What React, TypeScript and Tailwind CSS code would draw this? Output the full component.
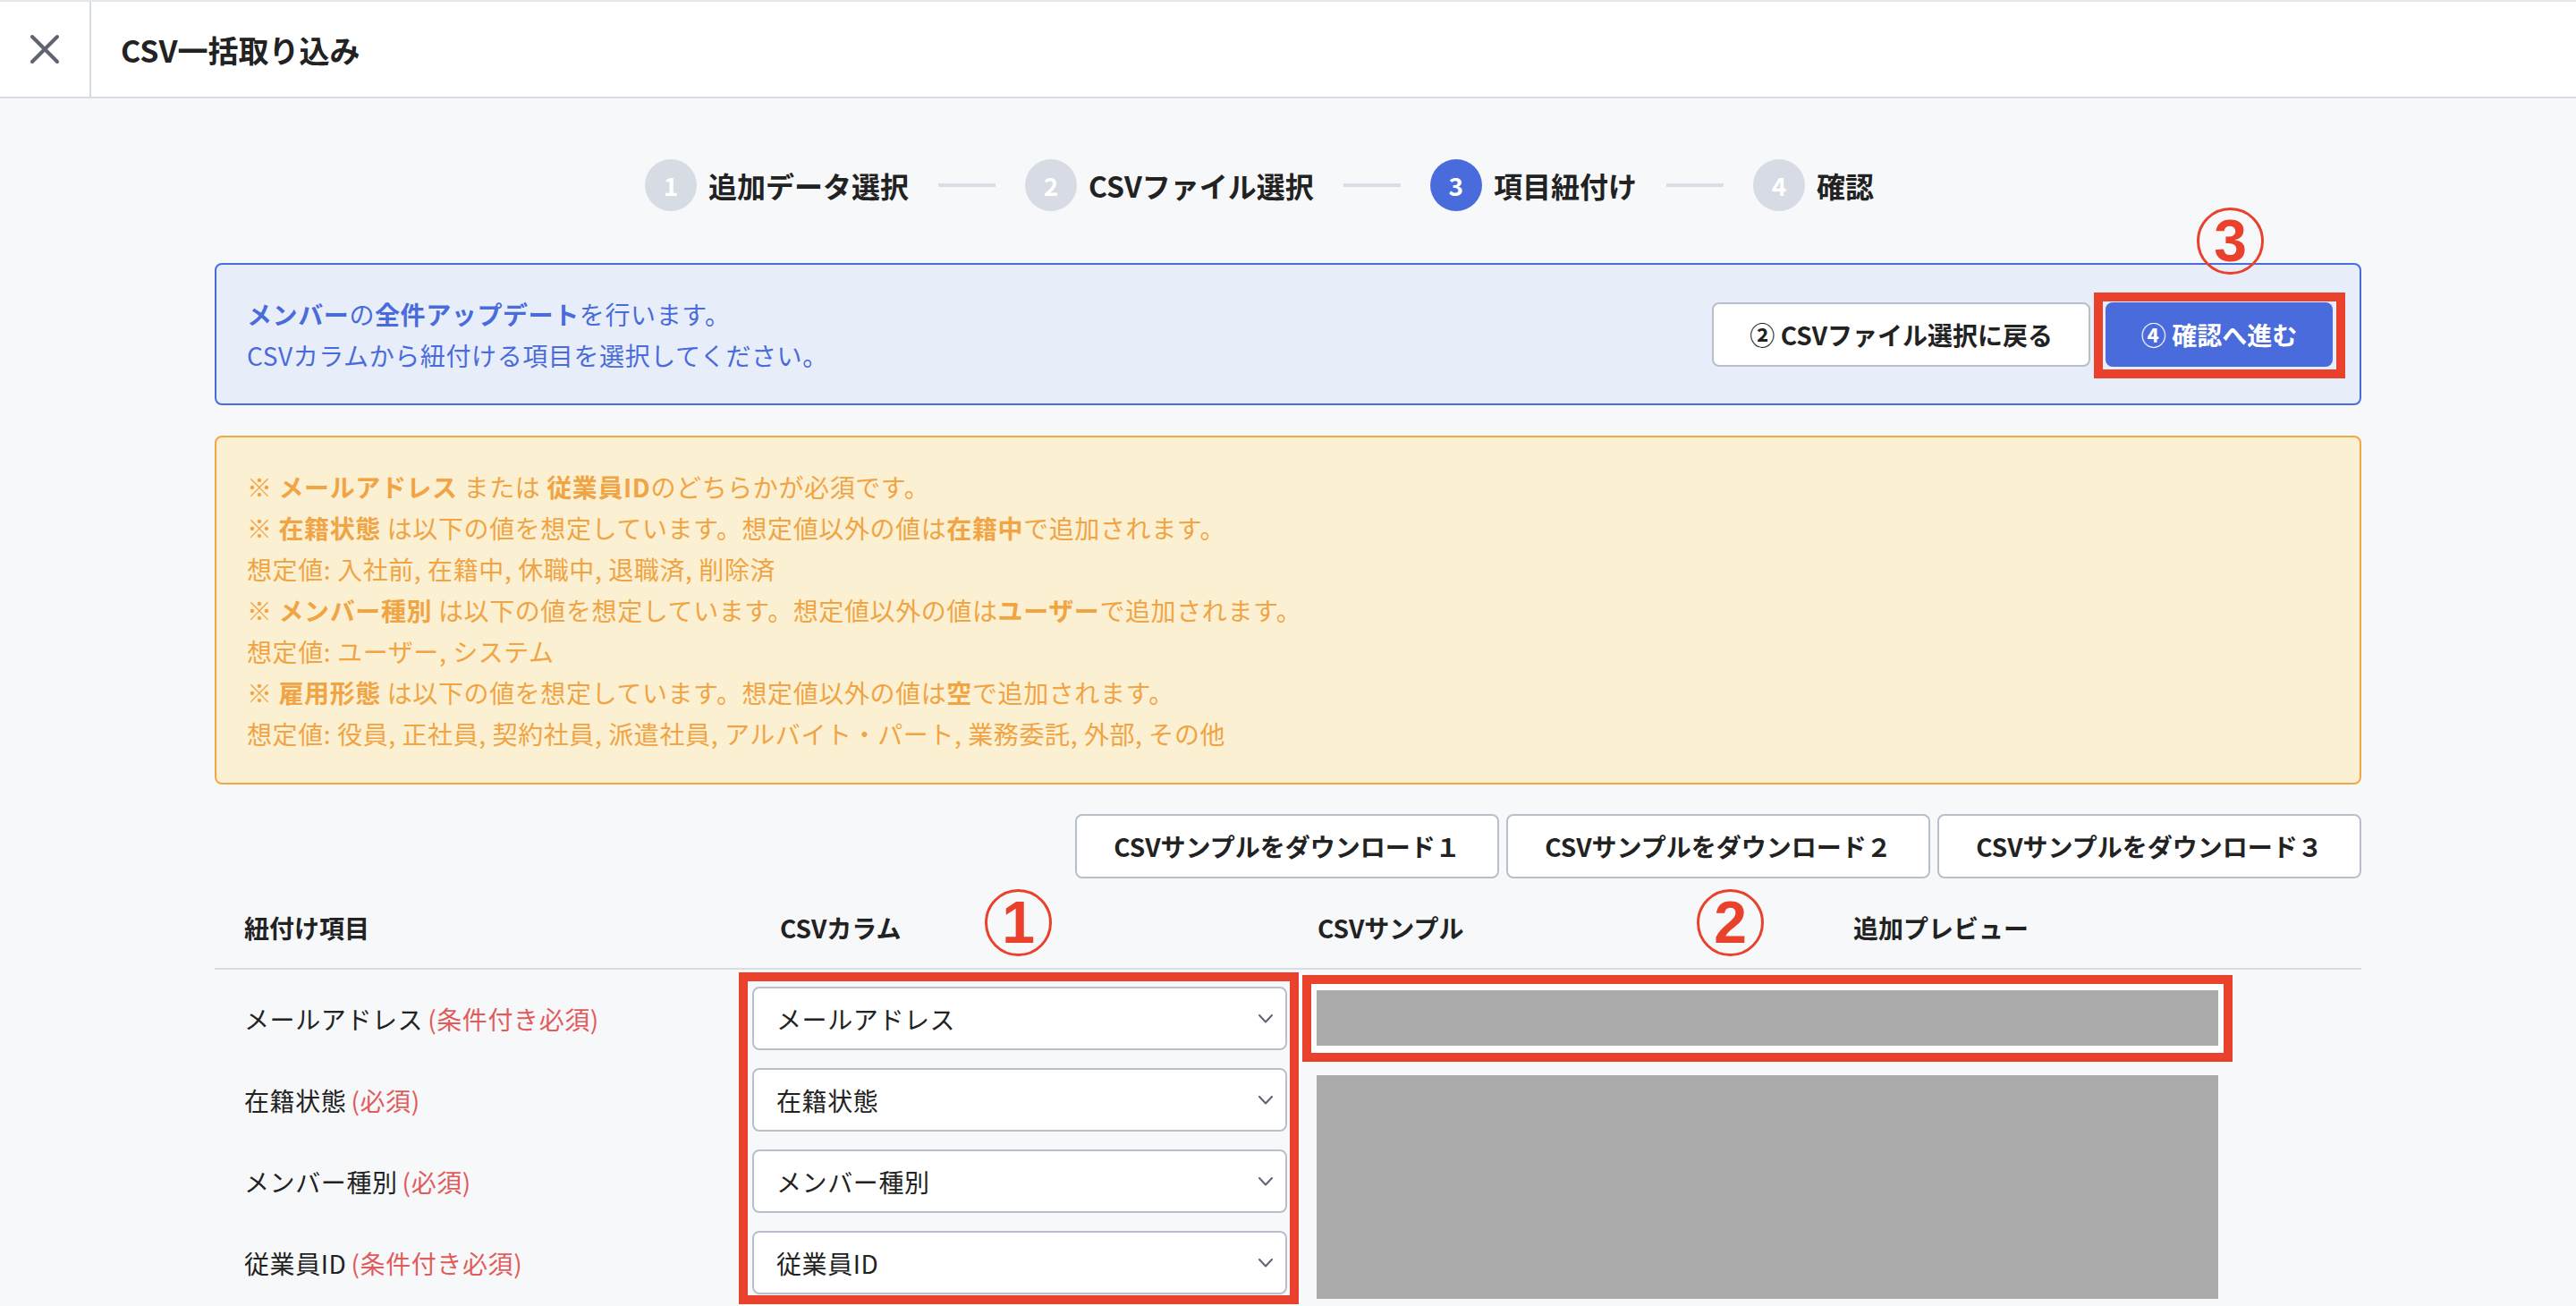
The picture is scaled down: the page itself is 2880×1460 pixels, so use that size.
import React from "react";

const Chevron = () => (
  <svg width="16" height="10" viewBox="0 0 16 10" fill="none">
    <polyline points="1,1 8,8.5 15,1" stroke="#5f6470" strokeWidth="2" strokeLinecap="round" strokeLinejoin="round" />
  </svg>
);

const Annot = ({ n, className }: { n: string; className: string }) => (
  <div
    className={`absolute w-[75px] h-[75px] rounded-full border-[3px] border-[#e9412b] flex items-center justify-center text-[#e9412b] text-[66px] font-bold leading-none font-['Liberation_Sans',sans-serif] ${className}`}
  >
    <span className="-mt-[2px]">{n}</span>
  </div>
);

const Step = ({ n, label, active }: { n: string; label: string; active?: boolean }) => (
  <div className="flex items-center gap-[13px]">
    <div
      className={`w-[58px] h-[58px] rounded-full flex items-center justify-center text-white text-[28px] font-bold ${
        active ? "bg-[#4a6bdb]" : "bg-[#d6dbe4]"
      }`}
    >
      {n}
    </div>
    <span className="text-[32px] font-bold text-[#222]">{label}</span>
  </div>
);

const StepLine = () => <div className="w-[64px] h-[4px] bg-[#d9dee6] mx-[33px]" />;

const B = ({ children }: { children: React.ReactNode }) => <span className="font-bold">{children}</span>;

const rows = [
  { label: "メールアドレス", req: "(条件付き必須)", value: "メールアドレス" },
  { label: "在籍状態", req: "(必須)", value: "在籍状態" },
  { label: "メンバー種別", req: "(必須)", value: "メンバー種別" },
  { label: "従業員ID", req: "(条件付き必須)", value: "従業員ID" },
];

export default function App() {
  return (
    <div className="w-full min-h-[1460px] bg-[#f7f8fa] font-['Noto_Sans_CJK_JP',sans-serif] text-[#222] overflow-hidden">
      {/* Header */}
      <div className="h-[110px] bg-white border-t-2 border-b-2 border-t-[#e4e7ec] border-b-[#d8dde5] flex items-stretch">
        <div className="w-[102px] border-r-2 border-[#d5dbe3] flex items-center justify-center">
          <svg width="34" height="34" viewBox="0 0 34 34" fill="none">
            <line x1="3" y1="3" x2="31" y2="31" stroke="#5f6470" strokeWidth="4" strokeLinecap="round" />
            <line x1="31" y1="3" x2="3" y2="31" stroke="#5f6470" strokeWidth="4" strokeLinecap="round" />
          </svg>
        </div>
        <div className="flex items-center pl-[33px] text-[34px] font-bold text-[#222]">CSV一括取り込み</div>
      </div>

      <div className="w-[2400px] mx-auto">
        {/* Steps */}
        <div className="mt-[68px] flex items-center justify-center pr-[64px]">
          <Step n="1" label="追加データ選択" />
          <StepLine />
          <Step n="2" label="CSVファイル選択" />
          <StepLine />
          <Step n="3" label="項目紐付け" active />
          <StepLine />
          <Step n="4" label="確認" />
        </div>

        {/* Info box */}
        <div className="relative mt-[58px] h-[159px] rounded-[8px] border-2 border-[#4a6bdb] bg-[#e8eef9] flex items-center justify-between pl-[34px] pr-[30px]">
          <div className="text-[28px] leading-[46px] tracking-[0.6px] text-[#4a6bdb]">
            <div>
              <B>メンバー</B>の<B>全件アップデート</B>を行います。
            </div>
            <div>CSVカラムから紐付ける項目を選択してください。</div>
          </div>
          <div className="flex items-center gap-[17px]">
            <button className="h-[72px] px-[40px] rounded-[8px] border-2 border-[#b9bfca] bg-white text-[28px] font-bold text-[#222]">
              ② CSVファイル選択に戻る
            </button>
            <div className="relative">
              <button className="h-[72px] w-[254px] rounded-[8px] bg-[#4a6bdb] text-[28px] font-bold text-white">
                ④ 確認へ進む
              </button>
              <div className="absolute -left-[13px] -right-[14px] -top-[11px] -bottom-[13px] border-[10px] border-[#e9412b]" />
            </div>
          </div>
          <Annot n="3" className="-top-[64px] right-[107px]" />
        </div>

        {/* Notice box */}
        <div className="mt-[34px] rounded-[8px] border-2 border-[#f2a647] bg-[#fcf0d2] px-[34px] py-[32px] text-[28px] leading-[46px] tracking-[0.6px] text-[#f0a444]">
          <div>
            ※ <B>メールアドレス</B> または <B>従業員ID</B>のどちらかが必須です。
          </div>
          <div>
            ※ <B>在籍状態</B> は以下の値を想定しています。想定値以外の値は<B>在籍中</B>で追加されます。
          </div>
          <div>想定値: 入社前, 在籍中, 休職中, 退職済, 削除済</div>
          <div>
            ※ <B>メンバー種別</B> は以下の値を想定しています。想定値以外の値は<B>ユーザー</B>で追加されます。
          </div>
          <div>想定値: ユーザー, システム</div>
          <div>
            ※ <B>雇用形態</B> は以下の値を想定しています。想定値以外の値は<B>空</B>で追加されます。
          </div>
          <div>想定値: 役員, 正社員, 契約社員, 派遣社員, アルバイト・パート, 業務委託, 外部, その他</div>
        </div>

        {/* Download buttons */}
        <div className="mt-[33px] flex justify-end gap-[8px]">
          {["１", "２", "３"].map((d) => (
            <button
              key={d}
              className="w-[474px] h-[72px] rounded-[8px] border-2 border-[#b9bfca] bg-white text-[28px] font-bold text-[#222]"
            >
              CSVサンプルをダウンロード{d}
            </button>
          ))}
        </div>

        {/* Table header */}
        <div className="relative h-[102px] border-b-2 border-[#d8dde5] grid grid-cols-[599px_601px_599px_1fr] items-center pl-[33px] pt-[10px] text-[28px] font-bold text-[#222]">
          <div>紐付け項目</div>
          <div>CSVカラム</div>
          <div>CSVサンプル</div>
          <div>追加プレビュー</div>
          <Annot n="1" className="top-[12px] left-[861px]" />
          <Annot n="2" className="top-[12px] left-[1657px]" />
        </div>

        {/* Table body */}
        <div className="flex">
          <div className="w-[601px] pt-[19px] flex flex-col gap-[20px]">
            {rows.map((r) => (
              <div key={r.label} className="h-[71px] flex items-center pl-[33px] text-[28px] tracking-[0.6px]">
                <span className="text-[#222]">{r.label}</span>
                <span className="text-[#e25b5b] ml-[5px]">{r.req}</span>
              </div>
            ))}
          </div>
          <div className="relative mt-[19px] w-[598px] self-start flex flex-col gap-[20px]">
            {rows.map((r) => (
              <div
                key={r.value}
                className="h-[71px] rounded-[8px] border-2 border-[#b9bfca] bg-white flex items-center justify-between pl-[25px] pr-[14px] text-[28px] tracking-[0.6px] text-[#222]"
              >
                <span>{r.value}</span>
                <Chevron />
              </div>
            ))}
            <div className="absolute -left-[15px] -right-[13px] -top-[16px] -bottom-[11px] border-[10px] border-[#e9412b]" />
          </div>
          <div className="ml-[33px] w-[1008px] pt-[23px] flex flex-col gap-[33px]">
            <div className="relative h-[62px]">
              <div className="absolute -left-[16px] -right-[16px] -top-[17px] -bottom-[18px] border-[10px] border-[#e9412b] bg-white" />
              <div className="relative h-full bg-[#aaaaaa]" />
            </div>
            <div className="h-[250px] bg-[#aaaaaa]" />
          </div>
        </div>
      </div>
    </div>
  );
}
